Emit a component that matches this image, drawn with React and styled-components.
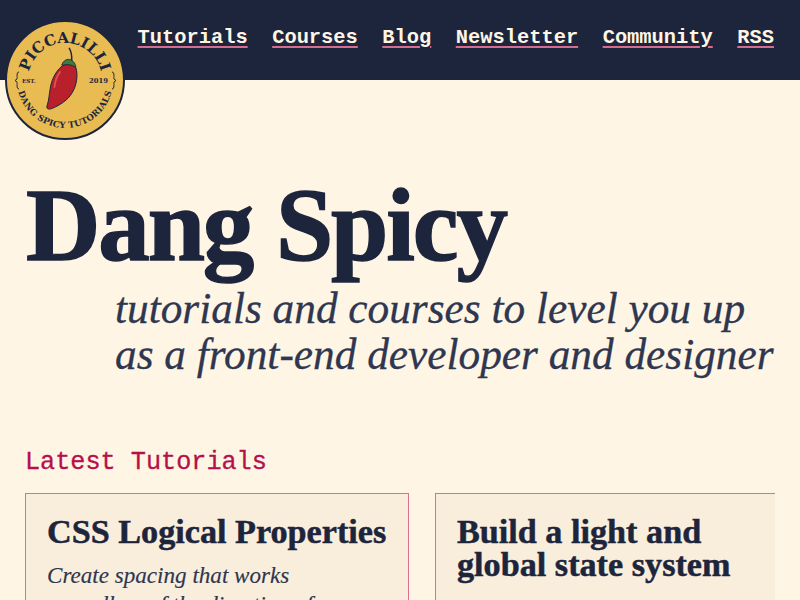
import React from "react";
import styled, { createGlobalStyle } from "styled-components";

const Global = createGlobalStyle`
  html, body { margin: 0; padding: 0; background: #fff5e5; height: 600px; overflow: hidden; }
  * { box-sizing: border-box; }
`;
const Page = styled.div`position: relative; width: 800px; height: 600px; overflow: hidden; background: #fff5e5;`;
const Header = styled.header`
  height: 80px; background: #1d253c; display: flex; justify-content: flex-end; align-items: center;
  padding: 0 26px 4px 0;
`;
const Nav = styled.nav`display: flex; gap: 24.5px;`;
const NavLink = styled.a`
  font: 700 20.4px/24px "Liberation Mono", monospace; color: #fff5e5; text-decoration: underline;
  text-decoration-color: #d66c90; text-decoration-thickness: 2px; text-underline-offset: 3px;
`;
const Badge = styled.svg`position: absolute; left: 5px; top: 20px; width: 120px; height: 120px;`;
const Hero = styled.section`padding: 90px 26px 0;`;
const Title = styled.h1`
  margin: 0; font: 700 103px/110px "Liberation Serif", serif; color: #1d253c; letter-spacing: -2.1px;
  -webkit-text-stroke: 1.5px #1d253c;
`;
const Sub = styled.p`
  margin: 5px 0 0 89px; font: italic 400 43.3px/46px "Liberation Serif", serif; color: #2e3650; white-space: nowrap;
  -webkit-text-stroke: .3px #2e3650;
`;
const Section = styled.section`padding: 71px 25px 0;`;
const Label = styled.h2`margin: 0; font: 400 25.2px/30px "Liberation Mono", monospace; color: #b5104a; -webkit-text-stroke: .3px #b5104a;`;
const Cards = styled.div`display: flex; gap: 26px; margin-top: 15px; overflow: hidden;`;
const Card = styled.article`
  flex: 0 0 384px; height: 300px; background: #f9eedc; border: 1px solid #d9728f; padding: 21px 10px 0 21px;
`;
const CardTitle = styled.h3`margin: 0; font: 700 34.2px/33px "Liberation Serif", serif; color: #1d253c; -webkit-text-stroke: .5px #1d253c;`;
const CardText = styled.p`margin: 13px 0 0; font: italic 400 23.1px/29px "Liberation Serif", serif; color: #2e3650; -webkit-text-stroke: .15px #2e3650;`;

const Logo = () => (
  <Badge viewBox="0 0 120 120" aria-label="Piccalilli">
    <defs>
      <path id="top" d="M23 60a37 37 0 0 1 74 0" />
      <path id="bot" d="M12 60a48 48 0 0 0 96 0" />
    </defs>
    <circle cx="60" cy="60" r="59" fill="#e8bc52" stroke="#1d253c" strokeWidth="2" />
    <text fontFamily="'DejaVu Serif',serif" fontWeight="700" fontSize="15" fill="#1d253c">
      <textPath href="#top" startOffset="50%" textAnchor="middle">PICCALILLI</textPath>
    </text>
    <text fontFamily="'DejaVu Serif',serif" fontWeight="700" fontSize="8.6" letterSpacing=".2" fill="#1d253c">
      <textPath href="#bot" startOffset="50%" textAnchor="middle">DANG SPICY TUTORIALS</textPath>
    </text>
    <text x="17" y="62.5" fontFamily="'DejaVu Serif',serif" fontWeight="700" fontSize="5.6" fill="#1d253c">EST.</text>
    <text x="84" y="62.5" fontFamily="'DejaVu Serif',serif" fontWeight="700" fontSize="6.8" fill="#1d253c">2019</text>
    <path d="M14 52c-3 0-1.5 6-2 7l-2 1.5 2 1.5c.5 1-1 7 2 7M107 52c3 0 1.5 6 2 7l2 1.5-2 1.5c-.5 1 1 7-2 7" fill="none" stroke="#1d253c" strokeWidth="1" />
    <path d="M64.3 28.3c2 3 2.600 7 2.400 12" fill="none" stroke="#1d253c" strokeWidth="1.500" strokeLinecap="round" />
    <path d="M56.700 45c1-3 3.600-5.700 6.600-5.700 4 0 7 3.500 7.700 8z" fill="#3f7a45" stroke="#1d253c" strokeWidth=".8" />
    <path d="M57 46C60 44 67 44 71 48C73 55 72 65 67 73C63 80 55 85 48 88C44 90 41 89 42 86C44 80 44 75 45 70C46 62 49 53 57 46Z" fill="#b8202c" stroke="#1d253c" strokeWidth="1" />
    <path d="M55 52c-3 4-5 10-5.500 15" fill="none" stroke="#d9535a" strokeWidth="1.800" strokeLinecap="round" />
  </Badge>
);

export default function App() {
  return (
    <Page>
      <Global />
      <Header>
        <Nav>
          {["Tutorials", "Courses", "Blog", "Newsletter", "Community", "RSS"].map((n) => (
            <NavLink key={n} href="#">{n}</NavLink>
          ))}
        </Nav>
      </Header>
      <Logo />
      <Hero>
        <Title>Dang Spicy</Title>
        <Sub>tutorials and courses to level you up<br />as a front-end developer and designer</Sub>
      </Hero>
      <Section>
        <Label>Latest Tutorials</Label>
        <Cards>
          <Card>
            <CardTitle>CSS Logical Properties</CardTitle>
            <CardText>Create spacing that works<br />regardless of the direction of your</CardText>
          </Card>
          <Card>
            <CardTitle>Build a light and<br />global state system</CardTitle>
            <CardText>Using JavaScript proxies and a pub/sub</CardText>
          </Card>
        </Cards>
      </Section>
    </Page>
  );
}
